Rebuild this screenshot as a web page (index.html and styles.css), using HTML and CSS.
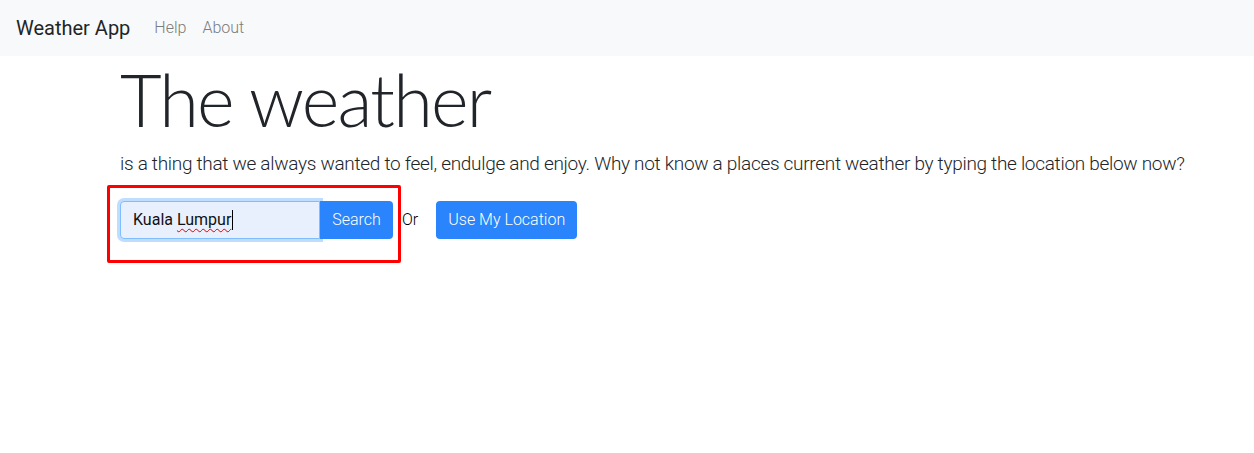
FILE: index.html
```html
<!DOCTYPE html>
<html lang="en">
<head>
<meta charset="utf-8">
<title>Weather App</title>
<link rel="stylesheet" href="styles.css">
</head>
<body>
<nav class="navbar">
  <a class="brand" href="#">Weather App</a>
  <a class="nav-link" href="#">Help</a>
  <a class="nav-link" href="#">About</a>
</nav>
<main class="main">
  <h1 class="display">The weather</h1>
  <p class="lead">is a thing that we always wanted to feel, endulge and enjoy. Why not know a places current weather by typing the location below now?</p>
  <div class="form-row">
    <div class="input-group">
      <div class="search-input"><span class="typed">Kuala <span class="misspelled">Lumpur</span></span><span class="caret"></span></div>
      <button class="btn btn-search" type="button">Search</button>
      <div class="highlight"></div>
    </div>
    <span class="or">Or</span>
    <button class="btn btn-location" type="button">Use My Location</button>
  </div>
</main>
</body>
</html>
```
FILE: styles.css
```css
* { box-sizing: border-box; }
html, body { margin: 0; padding: 0; }
html { min-height: 100%; }
body {
  min-height: 453px;
  font-family: Roboto, "Open Sans", sans-serif;
  color: #212529;
  background: #fff;
  font-size: 16px;
  line-height: 1.5;
}
.navbar {
  display: flex;
  align-items: center;
  height: 56px;
  padding: 0 16px;
  background: #f8f9fa;
}
.brand {
  font-size: 20px;
  color: #212529;
  text-decoration: none;
  margin-right: 16px;
}
.nav-link {
  font-size: 16px;
  font-weight: 300;
  color: #7a7d80;
  text-decoration: none;
  padding: 0 8px;
}
.main {
  padding: 0 0 60px 120px;
}
.display {
  font-family: Lato, Roboto, sans-serif;
  font-size: 72px;
  font-weight: 300;
  line-height: 1.2;
  letter-spacing: -1.8px;
  margin: 0 0 8px;
}
.lead {
  font-size: 19px;
  font-weight: 300;
  margin: 0 0 22px;
  letter-spacing: -0.3px;
  white-space: nowrap;
}
.form-row {
  display: flex;
  align-items: center;
}
.input-group {
  position: relative;
  display: flex;
}
.search-input {
  width: 200px;
  height: 38px;
  padding: 0 12px;
  display: flex;
  align-items: center;
  background: #e8f0fe;
  border: 1px solid #80bdff;
  border-radius: 4px 0 0 4px;
  box-shadow: 0 0 0 3px rgba(0, 123, 255, 0.25);
  font-size: 16px;
  color: #111;
}
.misspelled {
  text-decoration: underline wavy #e00000;
  text-decoration-thickness: 1px;
  text-underline-offset: 3px;
}
.caret {
  width: 1px;
  height: 20px;
  margin-left: 1px;
  background: #000;
}
.btn {
  height: 38px;
  border: 0;
  background: #2a84fb;
  color: #fff;
  font-family: inherit;
  font-size: 16px;
  font-weight: 300;
  padding: 0 12px;
  white-space: nowrap;
  cursor: pointer;
}
.btn-search {
  width: 73px;
  border-radius: 0 4px 4px 0;
}
.btn-location {
  width: 141px;
  border-radius: 4px;
}
.or {
  margin: 0 18px 0 9px;
  font-size: 16px;
  font-weight: 300;
  color: #000;
}
.highlight {
  position: absolute;
  left: -13px;
  top: -16px;
  right: -8px;
  bottom: -24px;
  border: 3px solid #f00;
  border-radius: 2px;
  pointer-events: none;
}
```
